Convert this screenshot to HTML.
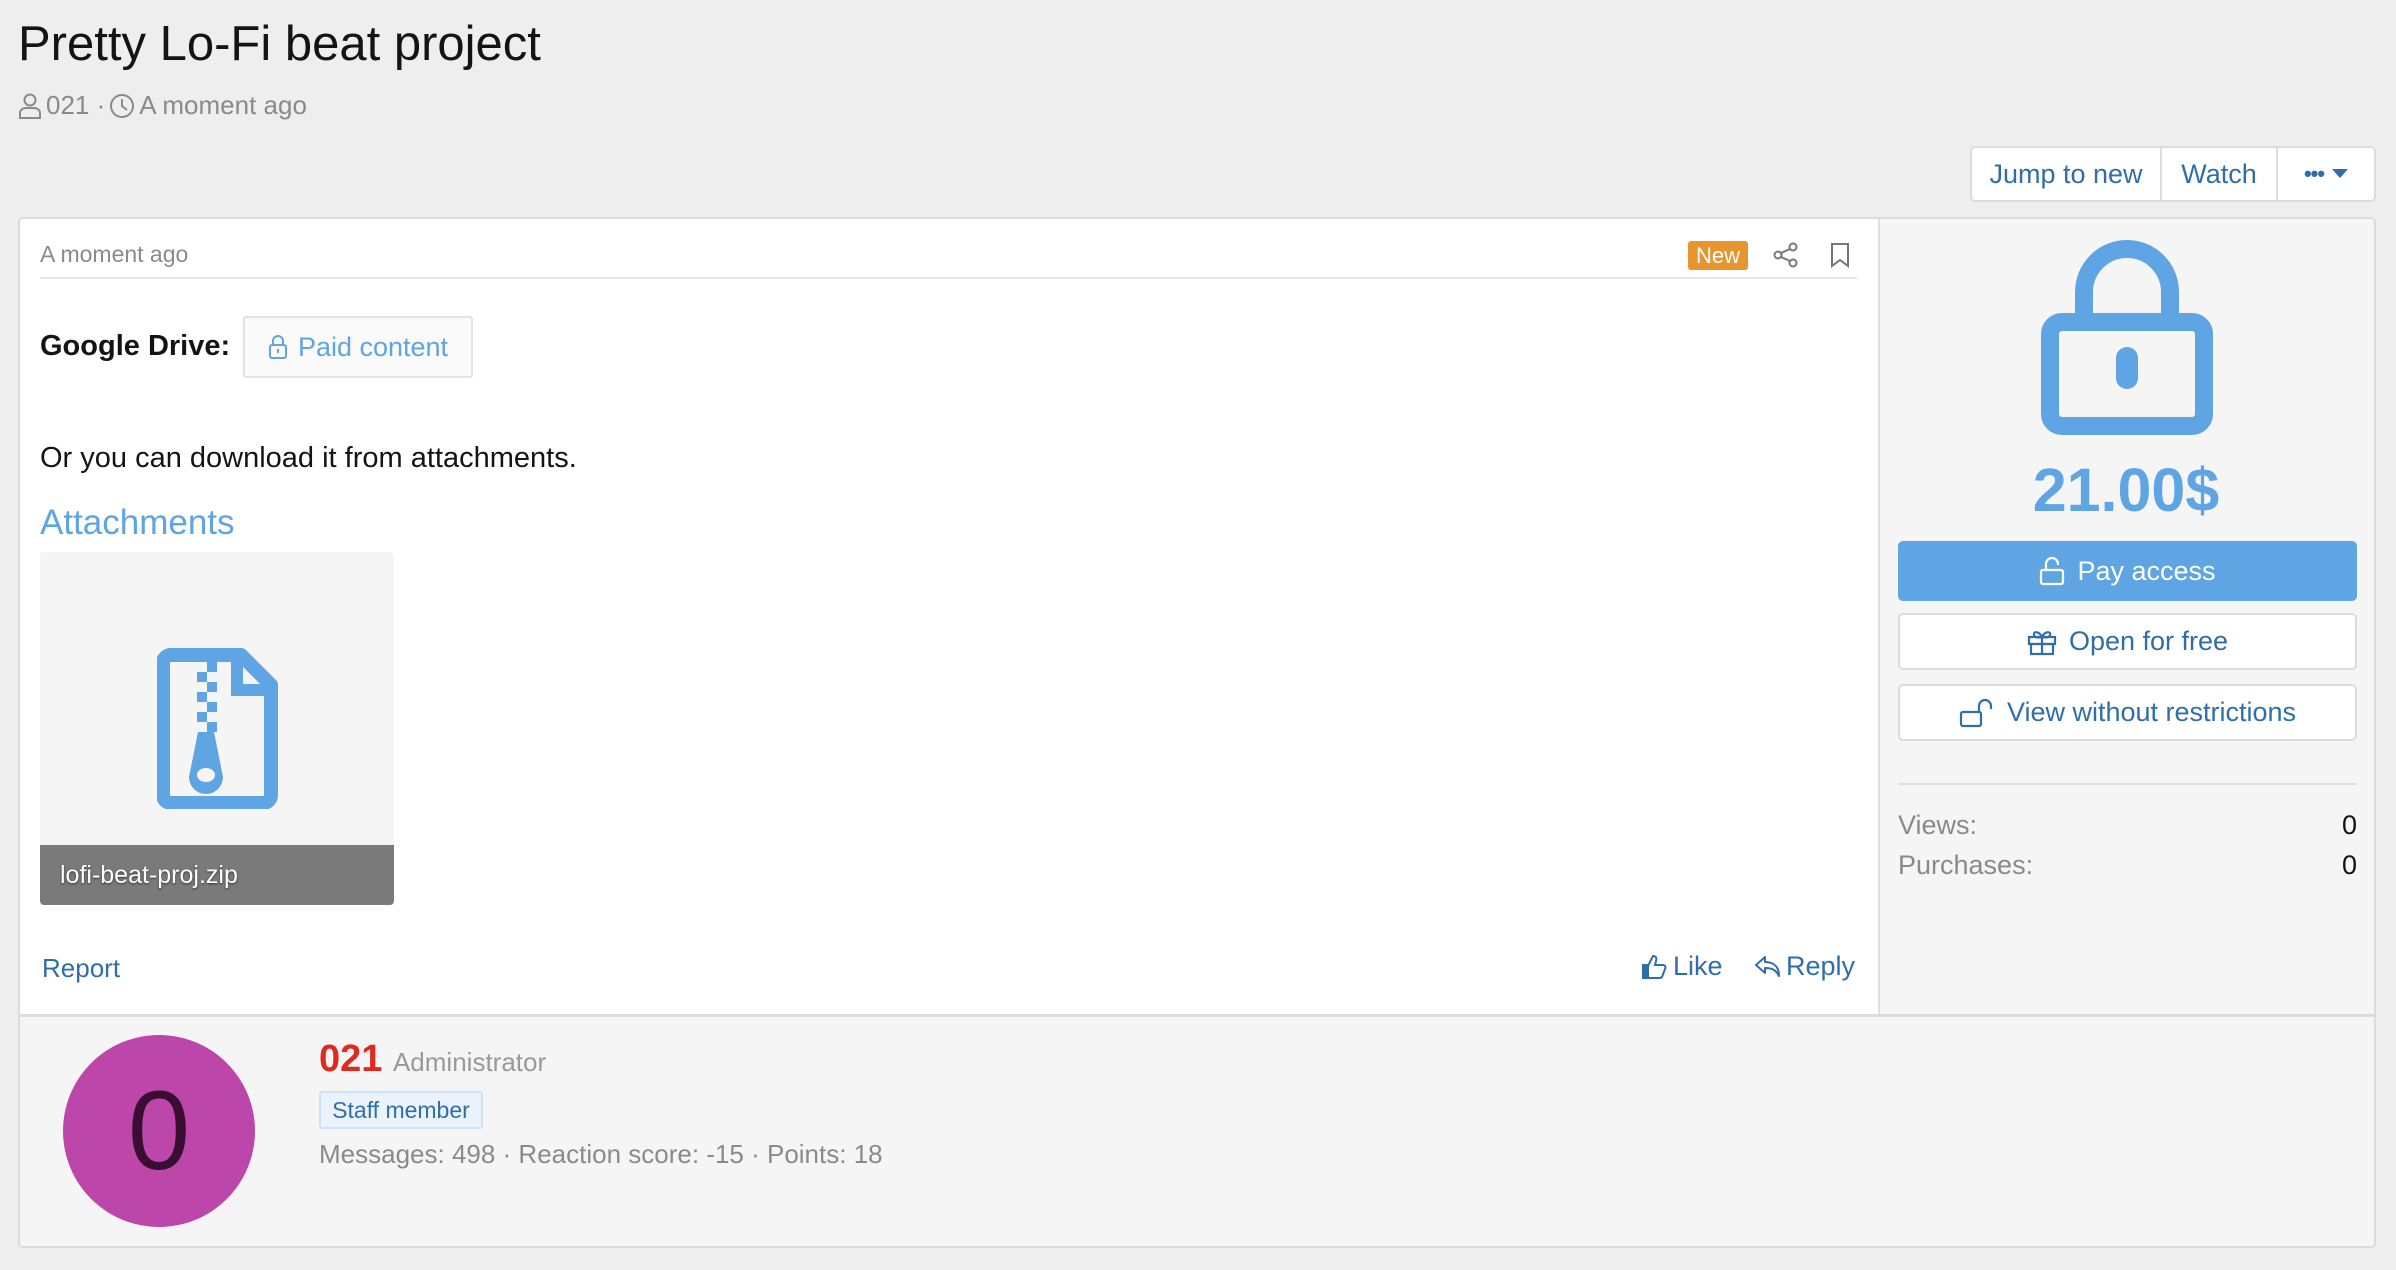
<!DOCTYPE html>
<html><head><meta charset="utf-8"><style>
*{margin:0;padding:0;box-sizing:border-box}
body{width:2396px;height:1270px;background:#eeeeee;font-family:"Liberation Sans",Arial,sans-serif;position:relative;overflow:hidden}
.a{position:absolute;white-space:nowrap}
.blue{color:#2f6ea9}
.btn{position:absolute;border:2px solid #dcdcdc;border-radius:5px;background:#fff;color:#2f6ea9;font-size:27px;display:flex;align-items:center;justify-content:center;gap:12px}
</style></head><body>
<div class="a" style="left:18px;top:16px;font-size:49px;color:#141414">Pretty Lo-Fi beat project</div>
<div class="a" style="left:18px;top:90px;font-size:26px;color:#8a8a8a;display:flex;align-items:center;gap:4px">
<svg width="24" height="26" viewBox="0 0 24 26" fill="none" stroke="#8a8a8a" stroke-width="2"><circle cx="12" cy="7" r="5.5"/><path d="M2 25v-5c0-3 3-5 6-5h8c3 0 6 2 6 5v5z"/></svg>
<span>021 ·</span>
<svg width="26" height="26" viewBox="0 0 26 26" fill="none" stroke="#8a8a8a" stroke-width="2"><circle cx="13" cy="13" r="11"/><path d="M13 6v7l5 4"/></svg>
<span>A moment ago</span></div>

<div class="a" style="left:1970px;top:146px;width:406px;height:56px;background:#fff;border:2px solid #dcdcdc;border-radius:5px;display:flex;font-size:27px;color:#2f6ea9">
<div style="width:190px;border-right:2px solid #dcdcdc;display:flex;align-items:center;justify-content:center">Jump to new</div>
<div style="width:116px;border-right:2px solid #dcdcdc;display:flex;align-items:center;justify-content:center">Watch</div>
<div style="flex:1;display:flex;align-items:center;justify-content:center;gap:8px"><span style="font-size:22px;font-weight:bold;letter-spacing:-1px">•••</span><svg width="16" height="10"><path d="M0 0h16L8 9z" fill="#2f6ea9"/></svg></div>
</div>

<div class="a" style="left:18px;top:217px;width:2358px;height:1031px;background:#fff;border:2px solid #dcdcdc;border-radius:5px;overflow:hidden">
<div class="a" style="left:1858px;top:0;width:500px;height:796px;background:#f5f5f5;border-left:2px solid #e0e0e0"></div>
<div class="a" style="left:0;top:795px;width:2358px;height:236px;background:#f5f5f5;border-top:3px solid #dcdcdc"></div>
</div>

<div class="a" style="left:40px;top:241px;font-size:23px;color:#8a8a8a">A moment ago</div>
<div class="a" style="left:40px;top:277px;width:1817px;height:2px;background:#e5e5e5"></div>
<div class="a" style="left:1688px;top:241px;width:60px;height:29px;background:#e8942f;border-radius:3px;color:#fff;font-size:22px;text-align:center;line-height:29px">New</div>
<svg class="a" style="left:1773px;top:242px" width="26" height="26" viewBox="0 0 26 26" fill="none" stroke="#777" stroke-width="2"><circle cx="20" cy="5" r="3.5"/><circle cx="5" cy="13" r="3.5"/><circle cx="20" cy="21" r="3.5"/><path d="M8 11l9-4M8 15l9 4"/></svg>
<svg class="a" style="left:1830px;top:242px" width="20" height="26" viewBox="0 0 20 26" fill="none" stroke="#777" stroke-width="2"><path d="M2 2h16v22l-8-6-8 6z"/></svg>

<div class="a" style="left:40px;top:330px;font-size:29px;font-weight:bold;color:#141414">Google Drive:</div>
<div class="a" style="left:243px;top:316px;width:230px;height:62px;border:2px solid #e3e3e3;background:#fafafa;border-radius:3px;display:flex;align-items:center;justify-content:center;gap:10px;color:#5fa4e3;font-size:27px">
<svg width="20" height="26" viewBox="0 0 20 26" fill="none" stroke="#5fa4e3" stroke-width="2"><path d="M5 11V7a5 5 0 0 1 10 0v4"/><rect x="2" y="11" width="16" height="13" rx="2"/><path d="M10 15v4"/></svg>Paid content</div>

<div class="a" style="left:40px;top:442px;font-size:29px;color:#141414">Or you can download it from attachments.</div>
<div class="a" style="left:40px;top:503px;font-size:35px;color:#5fa4e3">Attachments</div>

<div class="a" style="left:40px;top:552px;width:354px;height:353px;background:#f5f5f5;border-radius:4px;overflow:hidden">
<svg class="a" style="left:117px;top:96px" width="121" height="161" viewBox="0 0 121 161"><path d="M14 7h70l30 30v110a8 8 0 0 1-8 8H14a8 8 0 0 1-8-8V15a8 8 0 0 1 8-8z" fill="none" stroke="#5fa4e3" stroke-width="14" stroke-linejoin="round"/><path d="M80 10v32h32" fill="none" stroke="#5fa4e3" stroke-width="12"/><g fill="#5fa4e3"><rect x="50" y="14" width="10" height="10"/><rect x="40" y="24" width="10" height="10"/><rect x="50" y="34" width="10" height="10"/><rect x="40" y="44" width="10" height="10"/><rect x="50" y="54" width="10" height="10"/><rect x="40" y="64" width="10" height="10"/><rect x="50" y="74" width="10" height="10"/><path d="M41 84h16l9 45a17 17 0 1 1-34 0z"/></g><ellipse cx="49" cy="127" rx="9" ry="7" fill="#f5f5f5"/></svg>
<div class="a" style="left:0;top:293px;width:354px;height:60px;background:#7a7a7a;color:#fff;font-size:25px;line-height:60px;padding-left:20px;text-shadow:0 1px 2px #333">lofi-beat-proj.zip</div>
</div>

<div class="a blue" style="left:42px;top:953px;font-size:26px">Report</div>
<div class="a blue" style="left:1641px;top:951px;font-size:27px;display:flex;align-items:center;gap:6px"><svg width="26" height="26" viewBox="0 0 26 26" fill="none" stroke="#2f6ea9" stroke-width="2"><rect x="2" y="11" width="5" height="13" fill="#2f6ea9"/><path d="M7 12l5-10c3 0 4 2 3 5l-1 4h8c2 0 3 2 2 4l-3 8c-1 1-2 1-3 1H7"/></svg>Like</div>
<div class="a blue" style="left:1754px;top:951px;font-size:27px;display:flex;align-items:center;gap:4px"><svg width="28" height="26" viewBox="0 0 28 26" fill="none" stroke="#2f6ea9" stroke-width="2" stroke-linejoin="round"><path d="M11 3L2 11l9 8v-5c7 0 11 2 14 8 0-9-5-14-14-14z"/></svg>Reply</div>

<div class="a" style="left:63px;top:1035px;width:192px;height:192px;border-radius:50%;background:#bd46aa;color:#3a0d32;font-size:112px;text-align:center;line-height:192px">0</div>
<div class="a" style="left:319px;top:1038px;font-size:38px;font-weight:bold;color:#e0291f">021 <span style="font-size:26px;font-weight:normal;color:#999">Administrator</span></div>
<div class="a" style="left:319px;top:1091px;width:164px;height:38px;background:#eaf3fc;border:2px solid #cfe2f5;border-radius:3px;color:#2f6ea9;font-size:23px;text-align:center;line-height:34px">Staff member</div>
<div class="a" style="left:319px;top:1139px;font-size:26px;color:#8a8a8a">Messages: 498 · Reaction score: -15 · Points: 18</div>

<svg class="a" style="left:2041px;top:230px" width="172" height="205" viewBox="0 0 172 205" fill="none" stroke="#5fa4e3"><path d="M43 92V62a43 43 0 0 1 86 0v30" stroke-width="18"/><rect x="9" y="92" width="154" height="104" rx="12" stroke-width="18"/><path d="M86 128v20" stroke-width="22" stroke-linecap="round"/></svg>
<div class="a" style="left:1876px;top:455px;width:500px;text-align:center;font-size:61px;font-weight:bold;color:#5fa4e3">21.00$</div>
<div class="a" style="left:1898px;top:541px;width:459px;height:60px;background:#5fa4e3;border-radius:5px;color:#fff;font-size:27px;display:flex;align-items:center;justify-content:center;gap:12px"><svg width="26" height="30" viewBox="0 0 26 30" fill="none" stroke="#fff" stroke-width="2.2"><path d="M7 14V8a6 6 0 0 1 12 0v1"/><rect x="2" y="14" width="22" height="14" rx="2"/></svg>Pay access</div>
<div class="btn" style="left:1898px;top:613px;width:459px;height:57px"><svg width="30" height="28" viewBox="0 0 30 28" fill="none" stroke="#2f6ea9" stroke-width="2.2"><rect x="2" y="9" width="26" height="7"/><rect x="4" y="16" width="22" height="10"/><path d="M15 9v17M15 9c-3-6-9-6-8-2s8 2 8 2c3-6 9-6 8-2s-8 2-8 2"/></svg>Open for free</div>
<div class="btn" style="left:1898px;top:684px;width:459px;height:57px"><svg width="36" height="30" viewBox="0 0 36 30" fill="none" stroke="#2f6ea9" stroke-width="2.2"><rect x="2" y="14" width="20" height="14" rx="2"/><path d="M20 14V8a6 6 0 0 1 12 0v3"/></svg>View without restrictions</div>
<div class="a" style="left:1898px;top:783px;width:459px;height:2px;background:#dedede"></div>
<div class="a" style="left:1898px;top:810px;width:459px;font-size:27px;color:#8a8a8a">Views:<span style="float:right;color:#141414">0</span></div>
<div class="a" style="left:1898px;top:850px;width:459px;font-size:27px;color:#8a8a8a">Purchases:<span style="float:right;color:#141414">0</span></div>
</body></html>
